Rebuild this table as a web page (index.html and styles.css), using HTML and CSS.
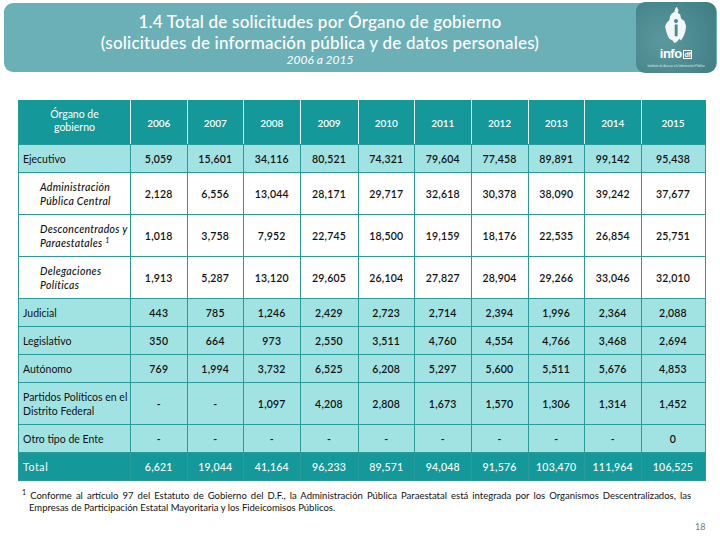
FILE: index.html
```html
<!DOCTYPE html>
<html lang="es">
<head>
<meta charset="utf-8">
<link rel="stylesheet" href="styles.css">
</head>
<body>
<header class="banner">
  <div class="title">
    <div class="t1">1.4 Total de solicitudes por Órgano de gobierno</div>
    <div class="t2">(solicitudes de información pública y de datos personales)</div>
    <div class="t3">2006 a 2015</div>
  </div>
  <div class="logo">
    <svg class="map" viewBox="0 0 40 50" width="34" height="42">
      <path d="M21 1 L23 5 L22 8 L25 10 L26 15 L30 18 L32 24 L31 31 L29 36 L26 41 L24 39 L21 43 L18 44 L16 41 L12 39 L10 35 L8 29 L7 24 L9 20 L12 17 L13 12 L15 9 L18 7 L19 3 Z" fill="#f2f7f7"/>
      <circle cx="20" cy="18" r="2.4" fill="#4a8a8f"/>
      <rect x="18.5" y="22" width="3.4" height="14" fill="#4a8a8f"/>
    </svg>
    <div class="brand">info<span class="df">df</span></div>
    <div class="tiny">Instituto de Acceso a la Información Pública</div>
  </div>
</header>

<table class="data">
  <colgroup>
    <col class="c-name"><col class="c-56"><col class="c-56"><col class="c-56"><col class="c-58"><col class="c-56"><col class="c-56"><col class="c-57"><col class="c-56"><col class="c-56"><col class="c-64">
  </colgroup>
  <thead>
    <tr class="head">
      <th class="name-h">Órgano de<br>gobierno</th>
      <th>2006</th><th>2007</th><th>2008</th><th>2009</th><th>2010</th><th>2011</th><th>2012</th><th>2013</th><th>2014</th><th>2015</th>
    </tr>
  </thead>
  <tbody>
    <tr class="light short">
      <td class="name">Ejecutivo</td>
      <td>5,059</td><td>15,601</td><td>34,116</td><td>80,521</td><td>74,321</td><td>79,604</td><td>77,458</td><td>89,891</td><td>99,142</td><td>95,438</td>
    </tr>
    <tr class="white tall">
      <td class="name sub">Administración<br>Pública Central</td>
      <td>2,128</td><td>6,556</td><td>13,044</td><td>28,171</td><td>29,717</td><td>32,618</td><td>30,378</td><td>38,090</td><td>39,242</td><td>37,677</td>
    </tr>
    <tr class="white tall">
      <td class="name sub">Desconcentrados y<br>Paraestatales <sup>1</sup></td>
      <td>1,018</td><td>3,758</td><td>7,952</td><td>22,745</td><td>18,500</td><td>19,159</td><td>18,176</td><td>22,535</td><td>26,854</td><td>25,751</td>
    </tr>
    <tr class="white tall">
      <td class="name sub">Delegaciones<br>Políticas</td>
      <td>1,913</td><td>5,287</td><td>13,120</td><td>29,605</td><td>26,104</td><td>27,827</td><td>28,904</td><td>29,266</td><td>33,046</td><td>32,010</td>
    </tr>
    <tr class="light short">
      <td class="name">Judicial</td>
      <td>443</td><td>785</td><td>1,246</td><td>2,429</td><td>2,723</td><td>2,714</td><td>2,394</td><td>1,996</td><td>2,364</td><td>2,088</td>
    </tr>
    <tr class="light short">
      <td class="name">Legislativo</td>
      <td>350</td><td>664</td><td>973</td><td>2,550</td><td>3,511</td><td>4,760</td><td>4,554</td><td>4,766</td><td>3,468</td><td>2,694</td>
    </tr>
    <tr class="light short">
      <td class="name">Autónomo</td>
      <td>769</td><td>1,994</td><td>3,732</td><td>6,525</td><td>6,208</td><td>5,297</td><td>5,600</td><td>5,511</td><td>5,676</td><td>4,853</td>
    </tr>
    <tr class="light tall">
      <td class="name">Partidos Políticos en el<br>Distrito Federal</td>
      <td>-</td><td>-</td><td>1,097</td><td>4,208</td><td>2,808</td><td>1,673</td><td>1,570</td><td>1,306</td><td>1,314</td><td>1,452</td>
    </tr>
    <tr class="light short">
      <td class="name">Otro tipo de Ente</td>
      <td>-</td><td>-</td><td>-</td><td>-</td><td>-</td><td>-</td><td>-</td><td>-</td><td>-</td><td>0</td>
    </tr>
    <tr class="total short">
      <td class="name">Total</td>
      <td>6,621</td><td>19,044</td><td>41,164</td><td>96,233</td><td>89,571</td><td>94,048</td><td>91,576</td><td>103,470</td><td>111,964</td><td>106,525</td>
    </tr>
  </tbody>
</table>

<div class="note">
  <span class="note-l1"><sup>1</sup> Conforme al artículo 97 del Estatuto de Gobierno del D.F., la Administración Pública Paraestatal está integrada por los Organismos Descentralizados, las</span>
  <span class="note-l2">Empresas de Participación Estatal Mayoritaria y los Fideicomisos Públicos.</span>
</div>

<div class="page">18</div>
</body>
</html>
```

FILE: styles.css
```css
html, body {
  margin: 0;
  padding: 0;
  background: #ffffff;
  width: 720px;
  height: 540px;
  overflow: hidden;
  font-family: Lato, "Open Sans", "Liberation Sans", sans-serif;
}

.banner {
  position: relative;
  margin: 3px 3px 0 4px;
  height: 69px;
  border-radius: 9px;
  background: #6cb0b7;
  display: flex;
  justify-content: flex-start;
}

.title {
  width: 632px;
  text-align: center;
  color: #ffffff;
  padding-top: 8px;
}

.t1, .t2 {
  font-size: 17px;
  line-height: 21px;
  letter-spacing: 0.2px;
  font-weight: 500;
}

.t3 {
  font-size: 12px;
  line-height: 16px;
  font-style: italic;
  margin-top: -1px;
}

.logo {
  position: absolute;
  right: 1px;
  top: -1px;
  width: 80px;
  height: 71px;
  border-radius: 9px;
  background: radial-gradient(circle at 35% 55%, #5c999e 0%, #4a898f 55%, #3e7c82 100%);
  display: flex;
  flex-direction: column;
  align-items: center;
  padding-top: 4px;
  box-sizing: border-box;
}

.map {
  display: block;
}

.brand {
  color: #ffffff;
  font-family: "Liberation Sans", sans-serif;
  font-weight: bold;
  font-size: 13px;
  line-height: 12px;
  margin-top: 0;
  letter-spacing: -0.5px;
}

.df {
  font-size: 7px;
  border: 1px solid #ffffff;
  padding: 0 1px;
  margin-left: 1px;
  vertical-align: 1px;
}

.tiny {
  color: #d8eaeb;
  font-size: 3px;
  line-height: 4px;
  margin-top: 3px;
  white-space: nowrap;
}

.data {
  margin: 28px 0 0 18px;
  width: 685px;
  table-layout: fixed;
  border-collapse: collapse;
  font-size: 10.5px;
}

.c-name { width: 112px; }
.c-56 { width: 56.5px; }
.c-57 { width: 57px; }
.c-58 { width: 58px; }
.c-64 { width: 64px; }

.data th, .data td {
  border: 1px solid #2b9a9b;
  text-align: center;
  vertical-align: middle;
  padding: 0;
}

.head th {
  background: #149899;
  color: #ffffff;
  font-weight: 600;
  height: 40px;
  font-size: 10px;
  border-left-color: #e8f6f6;
  border-right-color: #e8f6f6;
  border-top-color: #149899;
}

.head th.name-h {
  font-weight: normal;
  font-size: 10.5px;
  line-height: 13px;
  border-left-color: #2b9a9b;
  padding-bottom: 3px;
}

.head th:last-child {
  border-right-color: #149899;
}

.short td { height: 27px; }
.tall td { height: 41px; }

.light td {
  background: #a1e3e3;
}

.white td {
  background: #ffffff;
}

.data td {
  color: #111111;
  font-weight: 600;
  letter-spacing: 0.2px;
}

.data td.name {
  text-align: left;
  font-weight: normal;
  padding-left: 4px;
  line-height: 14px;
  color: #111111;
  letter-spacing: 0;
}

.data td.sub {
  font-style: italic;
  padding-left: 21px;
  font-weight: 500;
  letter-spacing: 0.3px;
}

.total td {
  background: #149899;
  color: #ffffff;
  font-weight: 500;
}

.total td.name {
  color: #ffffff;
  letter-spacing: 0.6px;
}

sup {
  font-size: 7px;
  line-height: 0;
  vertical-align: 4px;
}

.note {
  margin: 9px 29px 0 22px;
  font-size: 9.5px;
  line-height: 12px;
  color: #111111;
}

.note-l1 {
  display: block;
  text-align: justify;
  text-align-last: justify;
}

.note-l2 {
  display: block;
  padding-left: 7px;
}

.page {
  position: absolute;
  left: 695px;
  top: 521px;
  font-size: 9px;
  color: #777777;
}
```
